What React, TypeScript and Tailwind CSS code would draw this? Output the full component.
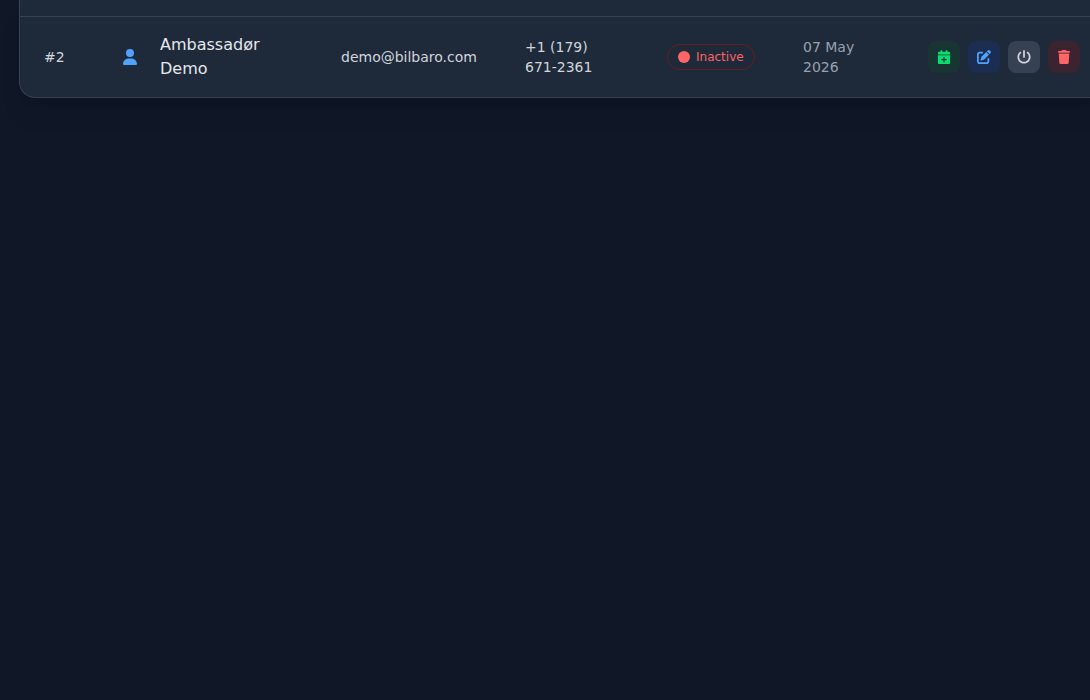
import type { ReactNode } from 'react';
import {
  FaCalendarPlus,
  FaCircle,
  FaPenToSquare,
  FaPowerOff,
  FaTrash,
  FaUser,
} from 'react-icons/fa6';

type User = {
  id: number;
  name: string;
  email: string;
  phone: string;
  active: boolean;
  createdAt: string;
};

const users: User[] = [
  {
    id: 2,
    name: 'Ambassadør Demo',
    email: 'demo@bilbaro.com',
    phone: '+1 (179) 671-2361',
    active: false,
    createdAt: '07 May 2026',
  },
];

const StatusBadge = ({ active }: { active: boolean }) => (
  <span
    className={`inline-flex items-center gap-1.5 rounded-full border px-2.5 py-1 text-xs leading-4 ${
      active ? 'border-green-800/60 text-green-400' : 'border-red-900/70 text-red-400'
    }`}
  >
    <FaCircle className="size-3" />
    {active ? 'Active' : 'Inactive'}
  </span>
);

const ActionButton = ({
  label,
  className,
  children,
}: {
  label: string;
  className: string;
  children: ReactNode;
}) => (
  <button
    type="button"
    aria-label={label}
    className={`flex size-8 shrink-0 items-center justify-center rounded-lg text-sm ${className}`}
  >
    {children}
  </button>
);

const UserRow = ({ user }: { user: User }) => (
  <tr className="h-[81px] border-t border-gray-700">
    <td className="px-6 text-sm text-gray-300">#{user.id}</td>
    <td className="px-6">
      <div className="flex items-center gap-2.5">
        <span className="flex size-10 shrink-0 items-center justify-center text-blue-400">
          <FaUser />
        </span>
        <span className="text-base text-gray-200">{user.name}</span>
      </div>
    </td>
    <td className="px-6 text-sm text-gray-300">{user.email}</td>
    <td className="px-6 text-sm text-gray-300">{user.phone}</td>
    <td className="px-6">
      <StatusBadge active={user.active} />
    </td>
    <td className="px-6 text-sm text-gray-400">{user.createdAt}</td>
    <td className="px-6">
      <div className="flex items-center gap-2">
        <ActionButton label="Add booking" className="bg-green-900/30 text-green-400">
          <FaCalendarPlus />
        </ActionButton>
        <ActionButton label="Edit" className="bg-blue-900/30 text-blue-400">
          <FaPenToSquare />
        </ActionButton>
        <ActionButton label="Deactivate" className="bg-gray-700 text-gray-300">
          <FaPowerOff />
        </ActionButton>
        <ActionButton label="Delete" className="bg-red-900/30 text-red-400">
          <FaTrash />
        </ActionButton>
      </div>
    </td>
  </tr>
);

function App() {
  return (
    <main className="min-h-screen overflow-hidden bg-gray-900 pl-[19px] font-['DejaVu_Sans',sans-serif]">
      <section className="min-w-[1086px] rounded-b-2xl border border-t-0 border-gray-700 bg-gray-800 shadow-xl">
        <table className="w-full table-fixed border-collapse text-left">
          <colgroup>
            <col className="w-[66px]" />
            <col className="w-[231px]" />
            <col className="w-[184px]" />
            <col className="w-[142px]" />
            <col className="w-[136px]" />
            <col className="w-[125px]" />
            <col className="w-[200px]" />
          </colgroup>
          <tbody>
            {/* bottom edge of the previous row */}
            <tr className="h-4">
              <td colSpan={7} />
            </tr>
            {users.map((user) => (
              <UserRow key={user.id} user={user} />
            ))}
          </tbody>
        </table>
      </section>
    </main>
  );
}

export default App;
